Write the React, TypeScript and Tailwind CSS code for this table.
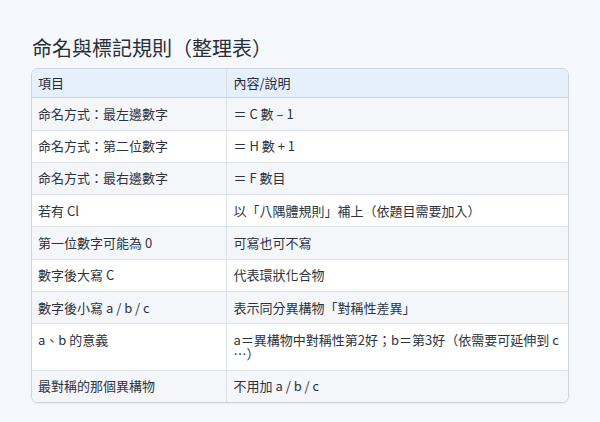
import React from "react";

const rows: [string, string][] = [
  ["命名方式：最左邊數字", "＝ C 數 – 1"],
  ["命名方式：第二位數字", "＝ H 數 + 1"],
  ["命名方式：最右邊數字", "＝ F 數目"],
  ["若有 Cl", "以「八隅體規則」補上（依題目需要加入）"],
  ["第一位數字可能為 0", "可寫也可不寫"],
  ["數字後大寫 C", "代表環狀化合物"],
  ["數字後小寫 a / b / c", "表示同分異構物「對稱性差異」"],
  ["a、b 的意義", "a＝異構物中對稱性第2好；b＝第3好（依需要可延伸到 c ⋯）"],
  ["最對稱的那個異構物", "不用加 a / b / c"],
];

export default function App() {
  return (
    <div
      lang="zh-TW"
      className="w-[600px] h-[422px] bg-[#f5f8fc] px-[31px] pt-[36px]"
      style={{ fontFamily: '"Noto Sans CJK TC", "Noto Sans", sans-serif' }}
    >
      <h1 className="text-[20px] leading-[24px] text-[#2a2f37] font-normal pl-[1px] mb-[8px]">
        命名與標記規則（整理表）
      </h1>
      <div className="border border-[#cdd4de] rounded-[7px] overflow-hidden bg-white shadow-[0_1px_2px_rgba(0,0,0,0.06)]">
        <table className="w-full border-collapse text-[13px] leading-[1.1] text-[#2c333d]">
          <thead>
            <tr className="bg-[#e6f0fc] border-b border-[#c9d3e0]">
              <th className="w-[194px] text-left font-normal text-[#1f2a3a] px-[6px] py-[7px] border-r border-[#d9e0ea]">
                項目
              </th>
              <th className="text-left font-normal text-[#1f2a3a] pl-[7px] pr-[2px] py-[7px]">
                內容/說明
              </th>
            </tr>
          </thead>
          <tbody>
            {rows.map(([a, b], i) => (
              <tr
                key={i}
                className={
                  (i % 2 === 0 ? "bg-[#f5f6fa]" : "bg-white") +
                  (i < rows.length - 1 ? " border-b border-[#dde2ea]" : "")
                }
              >
                <td className="align-top px-[6px] py-[8.5px] border-r border-[#dde2ea]">{a}</td>
                <td className="align-top pl-[7px] pr-[2px] py-[8.5px]">{b}</td>
              </tr>
            ))}
          </tbody>
        </table>
      </div>
    </div>
  );
}
